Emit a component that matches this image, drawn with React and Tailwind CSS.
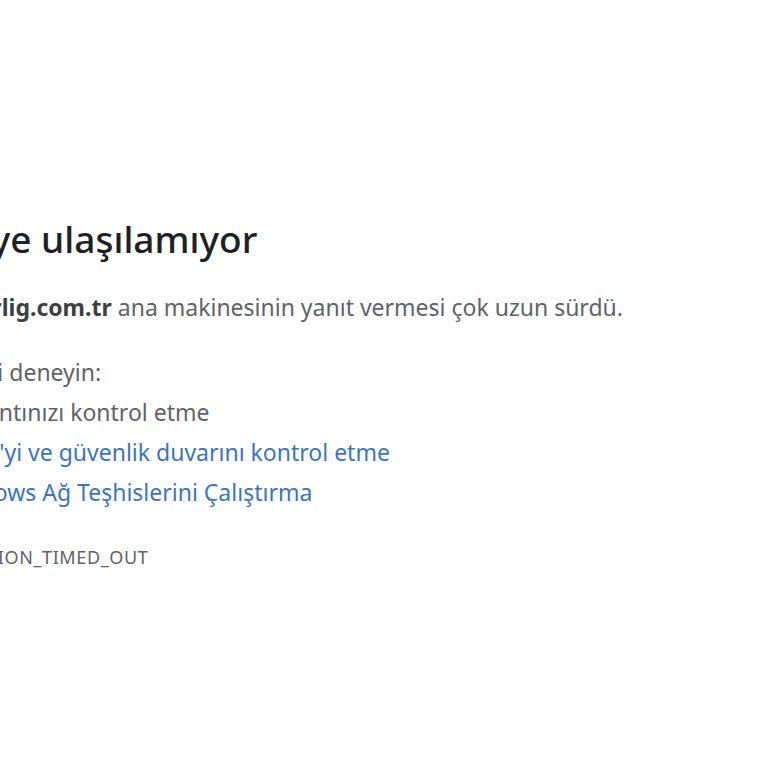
export default function App() {
  return (
    <div
      className="w-[768px] h-[768px] overflow-hidden bg-white"
      style={{ fontFamily: '"Noto Sans", "Open Sans", sans-serif' }}
    >
      <div className="ml-[-125px] pt-[214px] w-[1000px]">
        <h1 className="ml-[-4px] text-[37px] leading-[50px] font-medium text-[#202124]">
          Bu siteye ulaşılamıyor
        </h1>
        <p className="ml-[-3px] mt-[27px] text-[23px] leading-[32px] text-[#5f6368]">
          <span className="font-bold text-[#3c4043]">www.superlig.com.tr</span> ana makinesinin yanıt vermesi çok uzun sürdü.
        </p>
        <p className="ml-[-10px] mt-[29px] text-[23px] leading-[40px] text-[#5f6368]">Aşağıdakileri deneyin:</p>
        <ul className="text-[23px] leading-[40px] text-[#5f6368] pl-[63px] list-disc">
          <li>Bağlantınızı kontrol etme</li>
          <li className="text-[#3a75c4]">Proxy'yi ve güvenlik duvarını kontrol etme</li>
          <li className="text-[#3a75c4]">Windows Ağ Teşhislerini Çalıştırma</li>
        </ul>
        <div className="ml-[-8px] mt-[33px] text-[18px] leading-[24px] tracking-[0.6px] text-[#5f6368] uppercase">ERR_CONNECTION_TIMED_OUT</div>
      </div>
    </div>
  );
}
